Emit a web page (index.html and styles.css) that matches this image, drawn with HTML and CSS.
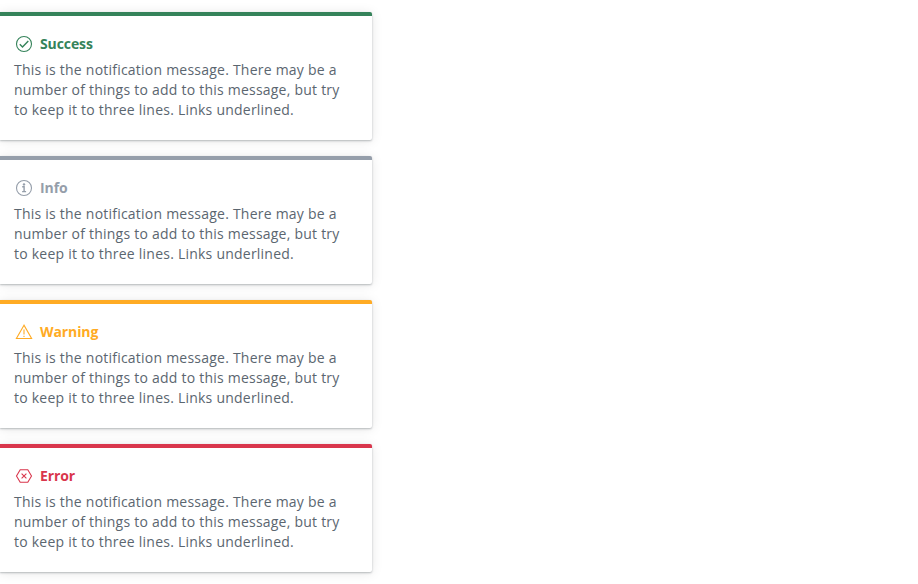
FILE: index.html
```html
<!DOCTYPE html>
<html lang="en">
<head>
<meta charset="utf-8">
<title>Notifications</title>
<link rel="stylesheet" href="styles.css">
</head>
<body>
<main class="stack">
  <section class="note success">
    <h2 class="title"><svg class="icon" viewBox="0 0 20 20"><circle cx="10" cy="10" r="7.5"/><path class="check" d="M5.8 10.3l2.7 2.7 5.8-6"/></svg>Success</h2>
    <p class="message">This is the notification message. There may be a number of things to add to this message, but try to keep it to three lines. Links underlined.</p>
  </section>
  <section class="note info">
    <h2 class="title"><svg class="icon" viewBox="0 0 20 20"><circle cx="10" cy="10" r="7.5"/><path class="stem" d="M8.2 8.7h1.9v4.6M8.1 13.6h4"/><circle class="dot" cx="10" cy="6.4" r="1.2"/></svg>Info</h2>
    <p class="message">This is the notification message. There may be a number of things to add to this message, but try to keep it to three lines. Links underlined.</p>
  </section>
  <section class="note warning">
    <h2 class="title"><svg class="icon" viewBox="0 0 20 20"><path d="M10 3.2L2.4 16.5h15.2zM10 7.5v5M10 13.7v1.2"/></svg>Warning</h2>
    <p class="message">This is the notification message. There may be a number of things to add to this message, but try to keep it to three lines. Links underlined.</p>
  </section>
  <section class="note error">
    <h2 class="title"><svg class="icon" viewBox="0 0 20 20"><path d="M6.2 3.8h7.6L17.5 10l-3.7 6.2H6.2L2.5 10zM7.6 7.6l4.8 4.8M12.4 7.6l-4.8 4.8"/></svg>Error</h2>
    <p class="message">This is the notification message. There may be a number of things to add to this message, but try to keep it to three lines. Links underlined.</p>
  </section>
</main>
</body>
</html>
```
FILE: styles.css
```css
body { margin: 0; background: #fff; font: 14px/20px "Open Sans", sans-serif; color: #5b6670; }
.stack { display: flex; flex-direction: column; gap: 16px; padding: 12px 0; width: 372px; }
.note { box-sizing: border-box; height: 128px; padding: 18px 28px 20px 14px; border-top: 4px solid; border-radius: 0 2px 2px 0; background: #fff; box-shadow: 0 1px 2px rgba(38, 50, 56, .3), 0 1px 12px rgba(0, 0, 0, .1); }
.title { display: flex; align-items: center; gap: 6px; margin: 0 0 6px; font-size: 14px; line-height: 20px; font-weight: 700; letter-spacing: -.1px; }
.icon { width: 20px; height: 20px; fill: none; stroke: currentColor; stroke-width: 1.1; }
.check, .stem { stroke-width: 1.4; }
.dot { fill: currentColor; stroke: none; }
.message { margin: 0; letter-spacing: .22px; word-spacing: .05px; }
.success { border-color: #35835a; }
.success .title { color: #35835a; }
.info { border-color: #959eaa; }
.info .title { color: #959eaa; }
.warning { border-color: #ffab24; }
.warning .title { color: #ffab24; }
.error { border-color: #d9364c; }
.error .title { color: #d9364c; }
```
